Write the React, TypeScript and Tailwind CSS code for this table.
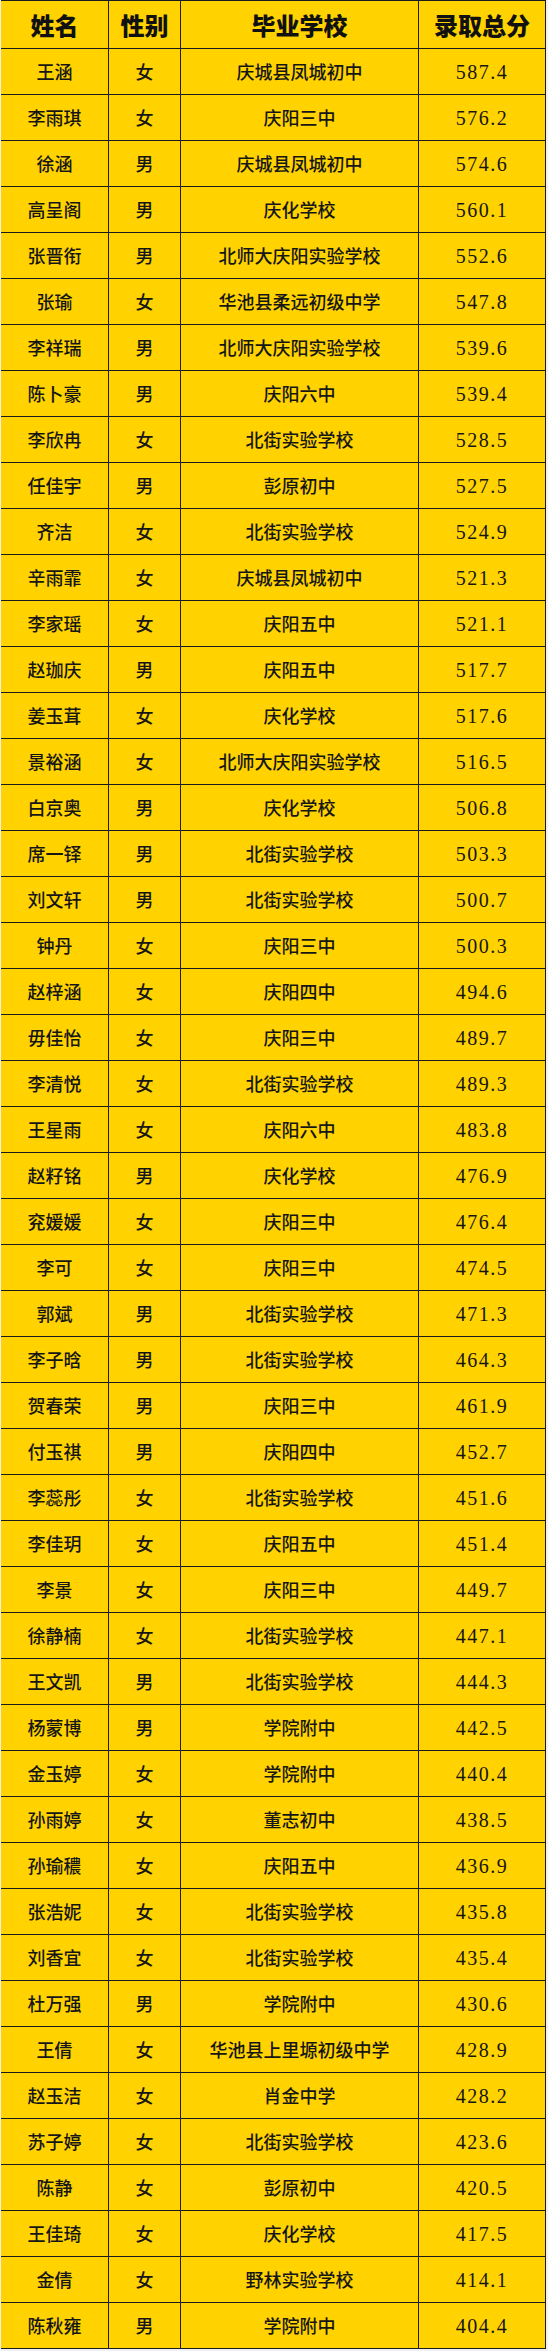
import React from "react";

type Row = [string, string, string, string];

const rows: Row[] = [
  ["王涵", "女", "庆城县凤城初中", "587.4"],
  ["李雨琪", "女", "庆阳三中", "576.2"],
  ["徐涵", "男", "庆城县凤城初中", "574.6"],
  ["高呈阁", "男", "庆化学校", "560.1"],
  ["张晋衔", "男", "北师大庆阳实验学校", "552.6"],
  ["张瑜", "女", "华池县柔远初级中学", "547.8"],
  ["李祥瑞", "男", "北师大庆阳实验学校", "539.6"],
  ["陈卜豪", "男", "庆阳六中", "539.4"],
  ["李欣冉", "女", "北街实验学校", "528.5"],
  ["任佳宇", "男", "彭原初中", "527.5"],
  ["齐洁", "女", "北街实验学校", "524.9"],
  ["辛雨霏", "女", "庆城县凤城初中", "521.3"],
  ["李家瑶", "女", "庆阳五中", "521.1"],
  ["赵珈庆", "男", "庆阳五中", "517.7"],
  ["姜玉茸", "女", "庆化学校", "517.6"],
  ["景裕涵", "女", "北师大庆阳实验学校", "516.5"],
  ["白京奥", "男", "庆化学校", "506.8"],
  ["席一铎", "男", "北街实验学校", "503.3"],
  ["刘文轩", "男", "北街实验学校", "500.7"],
  ["钟丹", "女", "庆阳三中", "500.3"],
  ["赵梓涵", "女", "庆阳四中", "494.6"],
  ["毋佳怡", "女", "庆阳三中", "489.7"],
  ["李清悦", "女", "北街实验学校", "489.3"],
  ["王星雨", "女", "庆阳六中", "483.8"],
  ["赵籽铭", "男", "庆化学校", "476.9"],
  ["兖媛媛", "女", "庆阳三中", "476.4"],
  ["李可", "女", "庆阳三中", "474.5"],
  ["郭斌", "男", "北街实验学校", "471.3"],
  ["李子晗", "男", "北街实验学校", "464.3"],
  ["贺春荣", "男", "庆阳三中", "461.9"],
  ["付玉祺", "男", "庆阳四中", "452.7"],
  ["李蕊彤", "女", "北街实验学校", "451.6"],
  ["李佳玥", "女", "庆阳五中", "451.4"],
  ["李景", "女", "庆阳三中", "449.7"],
  ["徐静楠", "女", "北街实验学校", "447.1"],
  ["王文凯", "男", "北街实验学校", "444.3"],
  ["杨蒙博", "男", "学院附中", "442.5"],
  ["金玉婷", "女", "学院附中", "440.4"],
  ["孙雨婷", "女", "董志初中", "438.5"],
  ["孙瑜穠", "女", "庆阳五中", "436.9"],
  ["张浩妮", "女", "北街实验学校", "435.8"],
  ["刘香宜", "女", "北街实验学校", "435.4"],
  ["杜万强", "男", "学院附中", "430.6"],
  ["王倩", "女", "华池县上里塬初级中学", "428.9"],
  ["赵玉洁", "女", "肖金中学", "428.2"],
  ["苏子婷", "女", "北街实验学校", "423.6"],
  ["陈静", "女", "彭原初中", "420.5"],
  ["王佳琦", "女", "庆化学校", "417.5"],
  ["金倩", "女", "野林实验学校", "414.1"],
  ["陈秋雍", "男", "学院附中", "404.4"],
];

const cjk = "font-['Noto_Sans_CJK_SC',sans-serif]";
const cell = "flex items-center justify-center border-r border-[#1c1c1c]";

const App: React.FC = () => {
  return (
    <div className="w-[548px] h-[2351px] bg-[#eef0f2] pl-px">
      <div className="w-[545px] bg-[#ffd200] text-[#161616]">
        {/* header */}
        <div className={`grid grid-cols-[108px_72px_238px_127px] h-[49px] border-y border-[#1c1c1c] ${cjk} font-black text-[24px] text-[#111]`}>
          <div className={cell}>姓名</div>
          <div className={cell}>性别</div>
          <div className={cell}>毕业学校</div>
          <div className={cell}>录取总分</div>
        </div>

        {rows.map(([name, sex, school, score], i) => (
          <div key={i} className="grid grid-cols-[108px_72px_238px_127px] h-[46px] border-b border-[#1c1c1c]">
            <div className={`${cell} ${cjk} text-[18px] font-medium`}>{name}</div>
            <div className={`${cell} ${cjk} text-[18px] font-medium`}>{sex}</div>
            <div className={`${cell} ${cjk} text-[18px] font-medium`}>{school}</div>
            <div className={`${cell} font-['Liberation_Serif',serif] text-[20px] tracking-[1.5px]`}>{score}</div>
          </div>
        ))}
      </div>
    </div>
  );
};

export default App;
